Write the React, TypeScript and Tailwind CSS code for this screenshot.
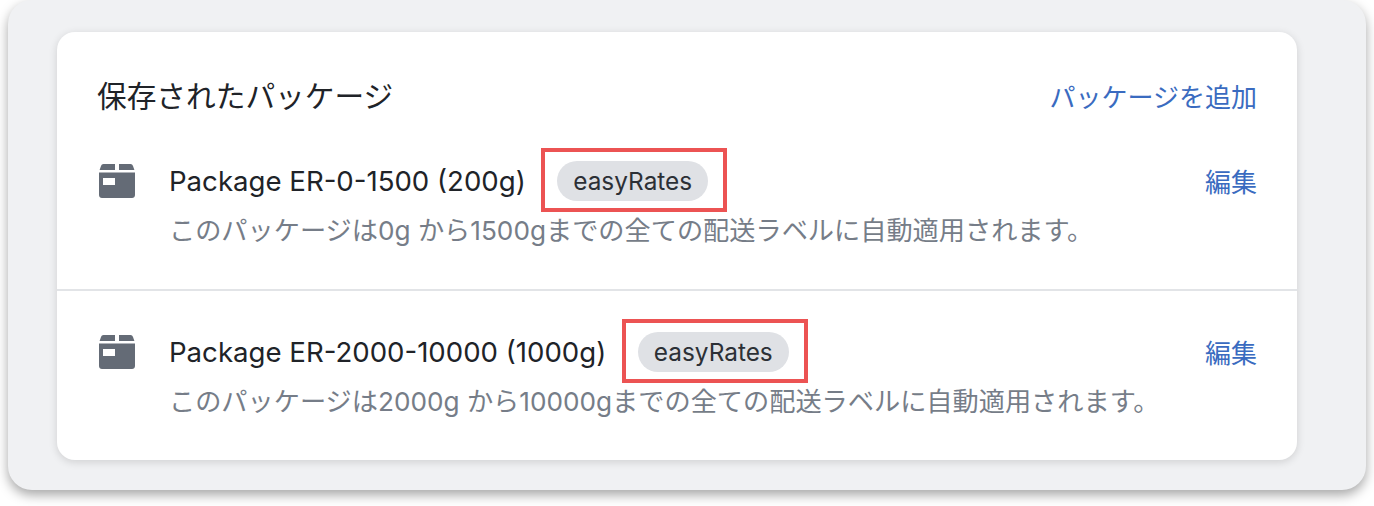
import React from "react";

const FONT = "font-['Inter','Noto_Sans_CJK_JP',sans-serif]";

interface PackageRowProps {
  name: string;
  description: string;
  divider?: boolean;
}

const BoxIcon = () => (
  <svg width="36" height="34" viewBox="0 0 36 34" className="shrink-0 text-[#646b76]" aria-hidden="true">
    <path fill="currentColor" d="M4.5 0H16V6H0.6L2 2C2.4 0.8 3.3 0 4.5 0Z" />
    <path fill="currentColor" d="M20 0H31.5C32.7 0 33.6 0.8 34 2L35.4 6H20Z" />
    <path
      fill="currentColor"
      fillRule="evenodd"
      d="M0 8.5H36V31C36 32.7 34.7 34 33 34H3C1.3 34 0 32.7 0 31ZM4 14V21H16V14Z"
    />
  </svg>
);

const PackageRow: React.FC<PackageRowProps> = ({ name, description, divider }) => (
  <div className={divider ? "border-t-2 border-[#e2e4e7] pt-[25px]" : ""}>
    <div className="flex items-start pr-[40px] pl-[42px]">
      <div className="mt-[19px] w-[70px]">
        <BoxIcon />
      </div>
      <div className="min-w-0 flex-1">
        <div className="flex h-[72px] items-center">
          <span className="whitespace-nowrap text-[27.6px] leading-[32px] text-[#202328]">{name}</span>
          <span className="relative ml-[31.5px] flex h-[40px] w-[151px] items-center justify-center rounded-full bg-[#dfe1e5] text-[24.4px] text-[#2c3036]">
            easyRates
            <span className="absolute -top-[13px] -left-[16px] h-[64px] w-[186px] border-[4px] border-[#ec5353]" />
          </span>
        </div>
        <p className="-mt-[2px] whitespace-nowrap text-[26.2px] leading-[32px] text-[#767d88]">{description}</p>
      </div>
      <a className="mt-[22px] text-[26px] leading-[32px] text-[#3a6bc0]">編集</a>
    </div>
  </div>
);

export default function App() {
  return (
    <div className={`h-[506px] w-[1374px] overflow-hidden bg-white px-[8px] ${FONT}`}>
      <div className="h-[490px] rounded-[24px] bg-[#f0f1f3] pt-[32px] pr-[69px] pl-[49px] shadow-[0_5px_12px_rgba(0,0,0,0.35)]">
        <div className="h-[428px] rounded-[18px] bg-white shadow-[0_2px_8px_rgba(0,0,0,0.14)]">
          <div className="flex items-start justify-between px-[40px] pt-[46px]">
            <h2 className="text-[29.7px] leading-[36px] font-normal text-[#202328]">保存されたパッケージ</h2>
            <a className="mt-[2px] text-[26px] leading-[36px] text-[#3a6bc0]">パッケージを追加</a>
          </div>
          <div className="mt-[29px]">
            <PackageRow
              name="Package ER-0-1500 (200g)"
              description="このパッケージは0g から1500gまでの全ての配送ラベルに自動適用されます。"
            />
          </div>
          <div className="mt-[42px]">
            <PackageRow
              divider
              name="Package ER-2000-10000 (1000g)"
              description="このパッケージは2000g から10000gまでの全ての配送ラベルに自動適用されます。"
            />
          </div>
        </div>
      </div>
    </div>
  );
}
